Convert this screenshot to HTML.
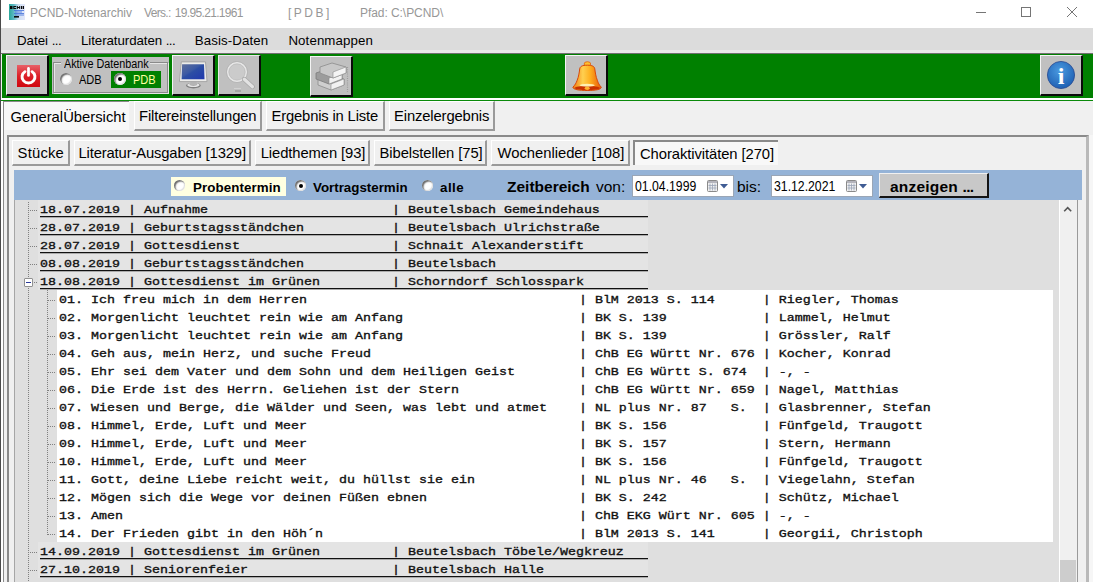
<!DOCTYPE html>
<html lang="de">
<head>
<meta charset="utf-8">
<title>PCND-Notenarchiv</title>
<style>
*{box-sizing:border-box;margin:0;padding:0}
html,body{width:1093px;height:582px;overflow:hidden;background:#f0f0f0}
body{position:relative;font-family:"Liberation Sans",Arial,sans-serif;color:#000}
.abs{position:absolute}
#titlebar{left:0;top:0;width:1093px;height:28px;background:#fff}
.tt{position:absolute;top:5px;font-size:12px;color:#979797;white-space:pre;line-height:16px}
#menubar{left:0;top:28px;width:1093px;height:25px;background:#dcdcdc;border-bottom:3px solid #e9e9e9}
.mi{position:absolute;top:33px;font-size:13.3px;line-height:16px;white-space:pre;color:#000}
#tbline{left:0;top:53px;width:1093px;height:1px;background:#707070}
#toolbar{left:2px;top:54px;width:1091px;height:44px;background:#008000}
.dots{letter-spacing:-.6px}
.btn{position:absolute;background:#c0c0c0;border-top:1px solid #f4f4f4;border-left:1px solid #f4f4f4;border-right:2px solid #0a0a0a;border-bottom:2px solid #0a0a0a}
#leftedge{left:0;top:0;width:1px;height:582px;background:#4a4a4a}
.tab{position:absolute;font-size:14.8px;white-space:pre;background:#f0f0f0;border-top:1px solid #fff;border-left:1px solid #fff;border-right:2px solid #9a9a9a;border-bottom:2px solid #9a9a9a}
.tab.act{background:#f8f8f8;border:0;border-top:1px solid #8a8a8a;border-left:1px solid #8a8a8a}
.tx{position:absolute;white-space:pre;line-height:18px}
.row{position:absolute;height:18px;font:bold 13.33px/18px "Liberation Mono","Courier New",monospace;white-space:pre;color:#111}
.row span{position:relative;top:1px;display:inline-block;font-weight:normal;-webkit-text-stroke:.38px #111;transform:scaleY(.88);transform-origin:0 12px}
.row.p{left:38px;width:610px;background:#e4e4e4;padding-left:2px}
.row.p i{position:absolute;left:2px;top:16px;width:608px;height:1px;background:#111;box-shadow:0 1px 0 rgba(0,0,0,.25)}
.row.c{left:57px;width:996px;background:#fff;padding-left:2px}
.vd{position:absolute;width:1px;background-image:linear-gradient(#808080 50%,transparent 50%);background-size:1px 2px}
.hd{position:absolute;height:1px;background-image:linear-gradient(90deg,#808080 50%,transparent 50%);background-size:2px 1px}
.bt{font-weight:bold;font-size:13.33px;position:absolute;white-space:pre;line-height:16px}
.radio{position:absolute;width:12px;height:12px;border-radius:50%;background:#fff;box-shadow:inset 1.500px 1.500px 1.500px #6a6a6a, inset -1px -1px 1px #e0e0e0}
.radio.on::after{content:"";position:absolute;left:4px;top:4px;width:4px;height:4px;border-radius:50%;background:#000}
.date{position:absolute;top:175px;height:22px;background:#fff;border:1px solid #9aa6b6}
</style>
</head>
<body>
<svg width="0" height="0" style="position:absolute"><defs><g id="cal">
<rect x=".5" y=".5" width="10" height="11" rx="1" fill="#f0f0f0" stroke="#8a8a8a"/>
<path d="M3 3.500v7M5.500 3.500v7M8 3.500v7M1.500 5.500h8M1.500 8h8" stroke="#9aa4b8" stroke-width=".8"/>
<rect x="1" y="1" width="9" height="2" fill="#b4b4bc"/>
<path d="M13 4h8l-4 4.500z" fill="#3f5c94"/>
</g></defs></svg>
<div id="titlebar" class="abs"></div>
<!-- app icon -->
<svg class="abs" style="left:9px;top:4px" width="16" height="16" viewBox="0 0 16 16">
<defs><linearGradient id="ai" x1="0" x2="1" y1="0" y2="0"><stop offset="0" stop-color="#2aa89a"/><stop offset=".3" stop-color="#5cb8c4"/><stop offset=".6" stop-color="#cfe0f4"/><stop offset="1" stop-color="#e4e8fa"/></linearGradient></defs>
<rect width="16" height="16" fill="url(#ai)"/>
<path d="M1 2h2.500v3h-2.500zM4.300 2h2.800v1h-1.800v1h1.800v1h-2.800zM7.800 2h1v1h1.400v-1h1v3h-1v-1h-1.400v1h-1zM12 2h1.200v3h-1.200zM13.800 2h1.200v3h-1.200z" fill="#0a0a0a"/>
<path d="M5 6.500h10M6 8h7M5 9.500h10M6 11h9" stroke="#3a6ad8" stroke-width=".9" opacity=".85"/>
<rect x="5" y="12" width="5" height="1.600" fill="#0a0a0a"/>
</svg>
<div class="tt" id="t1" style="left:30px">PCND-Notenarchiv</div>
<div class="tt" id="t2" style="left:144px;letter-spacing:-.67px;word-spacing:1.500px">Vers.: 19.95.21.1961</div>
<div class="tt" id="t3" style="left:288px;letter-spacing:-.4px">[ P D B ]</div>
<div class="tt" id="t4" style="left:360px;letter-spacing:-.06px">Pfad: C:\PCND\</div>
<!-- window controls -->
<svg class="abs" style="left:960px;top:0" width="133" height="30" viewBox="0 0 133 30">
<path d="M16 12.500h10" stroke="#757575" stroke-width="1" fill="none"/>
<rect x="61.5" y="7.5" width="9" height="9" stroke="#757575" stroke-width="1" fill="none"/>
<path d="M107 7l10 10M117 7l-10 10" stroke="#757575" stroke-width="1" fill="none"/>
</svg>
<div id="menubar" class="abs"></div>
<div class="mi" style="left:17px">Datei <span class="dots">...</span></div>
<div class="mi" style="left:81px;letter-spacing:-.07px">Literaturdaten <span class="dots">...</span></div>
<div class="mi" style="left:194.7px;letter-spacing:.1px">Basis-Daten</div>
<div class="mi" style="left:288.400px;letter-spacing:.1px">Notenmappen</div>
<div id="tbline" class="abs"></div>
<div id="toolbar" class="abs"></div>
<div class="abs" style="left:1px;top:98px;width:1092px;height:2px;background:#fff"></div>
<div class="abs" style="left:0;top:100px;width:1093px;height:1px;background:#0a8a0a"></div>

<!-- toolbar buttons -->
<div class="btn" style="left:6px;top:55px;width:43px;height:41px"></div>
<svg class="abs" style="left:17px;top:64.500px" width="23" height="22" viewBox="0 0 22 22" preserveAspectRatio="none">
<defs><linearGradient id="pg" x1="0" x2="0" y1="0" y2="1"><stop offset="0" stop-color="#e86068"/><stop offset=".5" stop-color="#dc2028"/><stop offset="1" stop-color="#d00810"/></linearGradient></defs>
<rect width="22" height="22" fill="url(#pg)"/>
<path d="M7.6 6.600a6.200 6.200 0 1 0 6.800 0" stroke="#fff" stroke-width="2.800" fill="none" stroke-linecap="round"/>
<path d="M11 3.400v7" stroke="#fff" stroke-width="2.600" stroke-linecap="round"/>
</svg>

<!-- group box -->
<div class="abs" style="left:52px;top:57px;width:117px;height:37px;background:#c0c0c0"></div>
<div class="abs" style="left:53px;top:62px;width:115px;height:31px;border:1px solid #8a8a8a;box-shadow:inset 1px 1px 0 #e6e6e6, 1px 1px 0 #e6e6e6"></div>
<div class="abs" style="left:61px;top:57px;width:89px;height:12px;background:#c0c0c0"></div>
<div class="abs" style="left:63.500px;top:57px;font-size:12px;line-height:14px;white-space:pre;transform-origin:0 0;transform:scaleX(.9)">Aktive Datenbank</div>
<div class="radio" style="left:60px;top:73px"></div>
<div class="abs" style="left:79px;top:73px;font-size:12px;line-height:14px;transform-origin:0 0;transform:scaleX(.92)">ADB</div>
<div class="abs" style="left:111px;top:71px;width:50px;height:17px;background:#008000"></div>
<div class="radio on" style="left:114px;top:73px"></div>
<div class="abs" style="left:133px;top:73px;font-size:12px;line-height:14px;color:#ffffa0;transform-origin:0 0;transform:scaleX(.92)">PDB</div>

<div class="btn" style="left:172px;top:55px;width:43px;height:41px"></div>
<svg class="abs" style="left:176px;top:58px" width="36" height="34" viewBox="0 0 36 34">
<defs><linearGradient id="sc" x1="0" x2="1" y1="0" y2="1"><stop offset="0" stop-color="#5f6f9c"/><stop offset=".42" stop-color="#3c5aa4"/><stop offset=".5" stop-color="#2c4ea4"/><stop offset="1" stop-color="#2038ae"/></linearGradient></defs>
<ellipse cx="17.400" cy="27.600" rx="7.400" ry="2.800" fill="#7e7e7e"/>
<ellipse cx="17.400" cy="27" rx="6.200" ry="2" fill="#e4e4e4"/>
<ellipse cx="17.400" cy="26.600" rx="3.800" ry="1.100" fill="#9a9a9a"/>
<path d="M14.500 23h6l.5 4h-7z" fill="#b4b4b4"/>
<path d="M5.300 3.900h24.200l1.500 19.700h-27.600z" fill="#ececea" stroke="#a2a2a2" stroke-width=".9"/>
<path d="M6.100 6.200h21.900l.5 15.100h-22.900z" fill="url(#sc)"/>
</svg>

<div class="btn" style="left:218px;top:55px;width:43px;height:41px;border-top-color:#e8e8e8;border-left-color:#e8e8e8"></div>
<svg class="abs" style="left:222px;top:58px" width="36" height="34" viewBox="0 0 36 34">
<circle cx="15" cy="14" r="9.300" fill="#cbcbcb" stroke="#e8e8e8" stroke-width="2"/>
<circle cx="15" cy="14" r="10.500" fill="none" stroke="#adadad" stroke-width=".7"/>
<circle cx="15" cy="14" r="8.200" fill="none" stroke="#b4b4b4" stroke-width=".6"/>
<path d="M22.300 21.300l8.200 7.400" stroke="#a8a8a8" stroke-width="4.800" stroke-linecap="round"/>
<path d="M22.300 21.300l8.200 7.400" stroke="#e2e2e2" stroke-width="3.200" stroke-linecap="round"/>
<path d="M13 33h6" stroke="#8a8a8a" stroke-width="1"/>
<path d="M12 30.500h7" stroke="#d2d2d2" stroke-width="1"/>
</svg>

<div class="btn" style="left:310px;top:56px;width:43px;height:41px"></div>
<svg class="abs" style="left:313px;top:60px" width="36" height="32" viewBox="0 0 36 32">
<!-- bottom book -->
<path d="M5 19l12 -4 14 4v6l-13 5 -13 -5z" fill="#cfcfcf" stroke="#8c8c8c" stroke-width=".8"/>
<path d="M18 24l13 -5v6l-13 5z" fill="#f2f2f2" stroke="#8c8c8c" stroke-width=".6"/>
<!-- middle book -->
<path d="M3 13l12 -4 14 4v6l-13 5 -13 -5z" fill="#9c9c9c" stroke="#7c7c7c" stroke-width=".8"/>
<path d="M16 18l13 -5v6l-13 5z" fill="#f2f2f2" stroke="#8c8c8c" stroke-width=".6"/>
<!-- top book -->
<path d="M7 7l12 -4 14 4v6l-13 5 -13 -5z" fill="#c8c8c8" stroke="#8c8c8c" stroke-width=".8"/>
<path d="M20 12l13 -5v6l-13 5z" fill="#f4f4f4" stroke="#8c8c8c" stroke-width=".6"/>
<path d="M34.500 7v27" stroke="#9c9c9c" stroke-width="1.200" stroke-dasharray="1 1.200"/>
</svg>

<div class="btn" style="left:565px;top:55px;width:43px;height:41px"></div>
<svg class="abs" style="left:571px;top:60px" width="32" height="32" viewBox="0 0 32 32">
<defs>
<linearGradient id="bg1" x1="0" x2="1" y1="0" y2="0"><stop offset="0" stop-color="#f07a10"/><stop offset=".35" stop-color="#ffd050"/><stop offset=".6" stop-color="#ffb020"/><stop offset="1" stop-color="#e85a08"/></linearGradient>
</defs>
<ellipse cx="16.400" cy="4" rx="3.300" ry="2.300" fill="#ffc030" stroke="#e06010" stroke-width=".8"/>
<path d="M16.400 5.200C11 5.200 9 6.500 8.700 9C8.200 13 7.500 17 6.200 20.200C5.200 23 4 25 1.900 27.200C2 29.500 8 30.500 16.200 30.500S30.300 29.500 30.300 27.200C28.200 25 27.200 23 26.300 20.200C25 17 24.300 13 23.800 9C23.500 6.500 21.500 5.200 16.400 5.200Z" fill="url(#bg1)" stroke="#d84808" stroke-width="1"/>
<ellipse cx="16.200" cy="28" rx="12.500" ry="2.200" fill="#c83000"/>
<ellipse cx="16.200" cy="25.300" rx="7.500" ry="1.500" fill="#fff4c0" opacity=".9"/>
<ellipse cx="16.200" cy="28.300" rx="2.500" ry="1.700" fill="#ffb030"/>
</svg>

<div class="btn" style="left:1040px;top:55px;width:43px;height:41px"></div>
<svg class="abs" style="left:1046px;top:60px" width="30" height="30" viewBox="0 0 30 30">
<defs><radialGradient id="ig" cx=".45" cy=".35" r=".7"><stop offset="0" stop-color="#4a9ae0"/><stop offset="1" stop-color="#1c5cb0"/></radialGradient></defs>
<circle cx="15" cy="15" r="13.600" fill="url(#ig)" stroke="#2a4a90" stroke-width=".8"/>
<text x="15" y="23.500" text-anchor="middle" font-family="Liberation Serif,serif" font-weight="bold" font-size="24" fill="#fff">i</text>
</svg>

<!-- main tabs -->
<div class="abs" style="left:1px;top:101px;width:2px;height:481px;background:#fff"></div>
<div class="tab act" style="left:3px;top:101px;width:126px;height:29px"><span class="tx" id="ta1" style="left:6.5px;top:6px;letter-spacing:0px">GeneralÜbersicht</span></div>
<div class="tab" style="left:134px;top:101px;width:128px;height:30px"><span class="tx" id="ta2" style="left:4px;top:5px;letter-spacing:-.14px">Filtereinstellungen</span></div>
<div class="tab" style="left:266px;top:101px;width:119px;height:30px"><span class="tx" id="ta3" style="left:4.5px;top:5px;letter-spacing:-.17px">Ergebnis in Liste</span></div>
<div class="tab" style="left:389px;top:101px;width:106px;height:30px"><span class="tx" id="ta4" style="left:4px;top:5px;letter-spacing:-.13px">Einzelergebnis</span></div>

<!-- page frame -->
<div class="abs" style="left:3px;top:130px;width:1px;height:452px;background:#8a8a8a"></div>
<div class="abs" style="left:7px;top:135px;width:1082px;height:447px;border-left:2px solid #8a8a8a;border-top:2px solid #8a8a8a;border-right:3px solid #b9b9b9;background:#f0f0f0"></div>
<div class="abs" style="left:1089px;top:135px;width:4px;height:447px;background:#f6f6f6"></div>

<!-- second tabs -->
<div class="tab" style="left:12px;top:140px;width:58px;height:26px"><span class="tx" id="tb1" style="left:4.600px;top:3px;letter-spacing:.2px">Stücke</span></div>
<div class="tab" style="left:74px;top:140px;width:177px;height:26px"><span class="tx" id="tb2" style="left:3.500px;top:3px;letter-spacing:-.15px">Literatur-Ausgaben [1329]</span></div>
<div class="tab" style="left:255px;top:140px;width:115px;height:26px"><span class="tx" id="tb3" style="left:4.700px;top:3px;letter-spacing:-.1px">Liedthemen [93]</span></div>
<div class="tab" style="left:374px;top:140px;width:113px;height:26px"><span class="tx" id="tb4" style="left:4.500px;top:3px;letter-spacing:-.08px">Bibelstellen [75]</span></div>
<div class="tab" style="left:491px;top:140px;width:139px;height:26px"><span class="tx" id="tb5" style="left:5.500px;top:3px;letter-spacing:-.02px">Wochenlieder [108]</span></div>
<div class="tab act" style="left:633px;top:140px;width:145px;height:25px;background:#f8f8f8;border-top:2px solid #8a8a8a;border-left:2px solid #8a8a8a"><span class="tx" id="tb6" style="left:5px;top:3px;letter-spacing:-.08px">Choraktivitäten [270]</span></div>

<!-- blue filter bar -->
<div class="abs" style="left:14px;top:170px;width:1068px;height:30px;background:#95b3d7"></div>
<div class="abs" style="left:171px;top:177px;width:115px;height:19px;background:#ffffe1"></div>
<div class="radio" style="left:174px;top:180px;width:11px;height:11px"></div>
<div class="bt" id="b1" style="top:180px;left:193px;letter-spacing:.1px">Probentermin</div>
<div class="radio on" style="left:295px;top:180px;width:11px;height:11px"></div>
<div class="bt" id="b2" style="top:180px;left:313px">Vortragstermin</div>
<div class="radio" style="left:422px;top:180px;width:11px;height:11px"></div>
<div class="bt" id="b3" style="top:180px;left:440px;letter-spacing:.5px">alle</div>
<div class="bt" id="b4" style="left:507px;top:177px;font-size:15.5px;line-height:20px">Zeitbereich</div>
<div class="abs" id="b5" style="left:596px;top:177px;font-size:15.5px;line-height:20px">von:</div>
<div class="date" style="left:632px;width:102px"><span class="tx" id="d1" style="left:1.500px;top:1px;font-size:14px;transform-origin:0 0;transform:scaleX(.875)">01.04.1999</span></div>
<svg class="abs" style="left:707px;top:180px" width="21" height="13" viewBox="0 0 21 13"><use href="#cal"/></svg>
<div class="abs" id="b6" style="left:737px;top:177px;font-size:15.5px;line-height:20px">bis:</div>
<div class="date" style="left:771px;width:102px"><span class="tx" id="d2" style="left:1.500px;top:1px;font-size:14px;transform-origin:0 0;transform:scaleX(.875)">31.12.2021</span></div>
<svg class="abs" style="left:846px;top:180px" width="21" height="13" viewBox="0 0 21 13"><use href="#cal"/></svg>
<div class="abs" style="left:879px;top:173px;width:110px;height:25px;background:#c8c8c8;border-top:1px solid #f0f0f0;border-left:1px solid #f0f0f0;border-right:2px solid #141414;border-bottom:2px solid #141414"><span class="tx" id="b7" style="left:10px;top:3px;font-weight:bold;font-size:15.500px;letter-spacing:.2px;line-height:20px">anzeigen <span class="dots">...</span></span></div>

<!-- tree -->
<div class="abs" id="tree" style="left:14px;top:200px;width:1045px;height:382px;background:#dfdfdf"></div>
<div class="row p" style="top:200px"><span>18.07.2019 | Aufnahme                       | Beutelsbach Gemeindehaus      </span><i></i></div><div class="hd" style="left:30px;top:210px;width:7px"></div>
<div class="row p" style="top:218px"><span>28.07.2019 | Geburtstagsständchen           | Beutelsbach Ulrichstraße      </span><i></i></div><div class="hd" style="left:30px;top:228px;width:7px"></div>
<div class="row p" style="top:236px"><span>28.07.2019 | Gottesdienst                   | Schnait Alexanderstift        </span><i></i></div><div class="hd" style="left:30px;top:246px;width:7px"></div>
<div class="row p" style="top:254px"><span>08.08.2019 | Geburtstagsständchen           | Beutelsbach                   </span><i></i></div><div class="hd" style="left:30px;top:264px;width:7px"></div>
<div class="row p" style="top:272px"><span>18.08.2019 | Gottesdienst im Grünen         | Schorndorf Schlosspark        </span><i></i></div><div class="hd" style="left:30px;top:282px;width:7px"></div>
<div class="row c" style="top:290px"><span>01. Ich freu mich in dem Herren                                  | BlM 2013 S. 114      | Riegler, Thomas</span></div><div class="hd" style="left:48px;top:300px;width:8px"></div>
<div class="row c" style="top:308px"><span>02. Morgenlicht leuchtet rein wie am Anfang                      | BK S. 139            | Lammel, Helmut</span></div><div class="hd" style="left:48px;top:318px;width:8px"></div>
<div class="row c" style="top:326px"><span>03. Morgenlicht leuchtet rein wie am Anfang                      | BK S. 139            | Grössler, Ralf</span></div><div class="hd" style="left:48px;top:336px;width:8px"></div>
<div class="row c" style="top:344px"><span>04. Geh aus, mein Herz, und suche Freud                          | ChB EG Württ Nr. 676 | Kocher, Konrad</span></div><div class="hd" style="left:48px;top:354px;width:8px"></div>
<div class="row c" style="top:362px"><span>05. Ehr sei dem Vater und dem Sohn und dem Heiligen Geist        | ChB EG Württ S. 674  | -, -</span></div><div class="hd" style="left:48px;top:372px;width:8px"></div>
<div class="row c" style="top:380px"><span>06. Die Erde ist des Herrn. Geliehen ist der Stern               | ChB EG Württ Nr. 659 | Nagel, Matthias</span></div><div class="hd" style="left:48px;top:390px;width:8px"></div>
<div class="row c" style="top:398px"><span>07. Wiesen und Berge, die Wälder und Seen, was lebt und atmet    | NL plus Nr. 87   S.  | Glasbrenner, Stefan</span></div><div class="hd" style="left:48px;top:408px;width:8px"></div>
<div class="row c" style="top:416px"><span>08. Himmel, Erde, Luft und Meer                                  | BK S. 156            | Fünfgeld, Traugott</span></div><div class="hd" style="left:48px;top:426px;width:8px"></div>
<div class="row c" style="top:434px"><span>09. Himmel, Erde, Luft und Meer                                  | BK S. 157            | Stern, Hermann</span></div><div class="hd" style="left:48px;top:444px;width:8px"></div>
<div class="row c" style="top:452px"><span>10. Himmel, Erde, Luft und Meer                                  | BK S. 156            | Fünfgeld, Traugott</span></div><div class="hd" style="left:48px;top:462px;width:8px"></div>
<div class="row c" style="top:470px"><span>11. Gott, deine Liebe reicht weit, du hüllst sie ein             | NL plus Nr. 46   S.  | Viegelahn, Stefan</span></div><div class="hd" style="left:48px;top:480px;width:8px"></div>
<div class="row c" style="top:488px"><span>12. Mögen sich die Wege vor deinen Füßen ebnen                   | BK S. 242            | Schütz, Michael</span></div><div class="hd" style="left:48px;top:498px;width:8px"></div>
<div class="row c" style="top:506px"><span>13. Amen                                                         | ChB EKG Würt Nr. 605 | -, -</span></div><div class="hd" style="left:48px;top:516px;width:8px"></div>
<div class="row c" style="top:524px"><span>14. Der Frieden gibt in den Höh´n                                | BlM 2013 S. 141      | Georgii, Christoph</span></div><div class="hd" style="left:48px;top:534px;width:8px"></div>
<div class="row p" style="top:542px"><span>14.09.2019 | Gottesdienst im Grünen         | Beutelsbach Töbele/Wegkreuz   </span><i></i></div><div class="hd" style="left:30px;top:552px;width:7px"></div>
<div class="row p" style="top:560px"><span>27.10.2019 | Seniorenfeier                  | Beutelsbach Halle             </span><i></i></div><div class="hd" style="left:30px;top:570px;width:7px"></div>
<div class="vd" style="left:28px;top:202px;height:380px"></div>
<div class="vd" style="left:47px;top:290px;height:245px"></div>
<div class="abs" style="left:24px;top:278px;width:9px;height:9px;background:#fff;border:1px solid #919191;border-radius:1px"></div>
<div class="abs" style="left:26px;top:282px;width:5px;height:1px;background:#2a3a9a"></div>
<!-- scrollbar -->
<div class="abs" style="left:1059px;top:200px;width:18px;height:382px;background:#f0f0f0;border-left:1px solid #fff"></div>
<div class="abs" style="left:14px;top:200px;width:1px;height:382px;background:#a6a6a6"></div>
<svg class="abs" style="left:1059px;top:200px" width="18" height="18" viewBox="0 0 18 18"><path d="M5.200 11.200l3.500 -3.500 3.500 3.500" stroke="#555" stroke-width="1.600" fill="none"/></svg>
<div class="abs" style="left:1060px;top:560px;width:16px;height:22px;background:#cdcdcd"></div>
<div class="abs" style="left:1077px;top:200px;width:1px;height:382px;background:#9a9a9a"></div>
<div id="leftedge" class="abs"></div>
</body>
</html>
